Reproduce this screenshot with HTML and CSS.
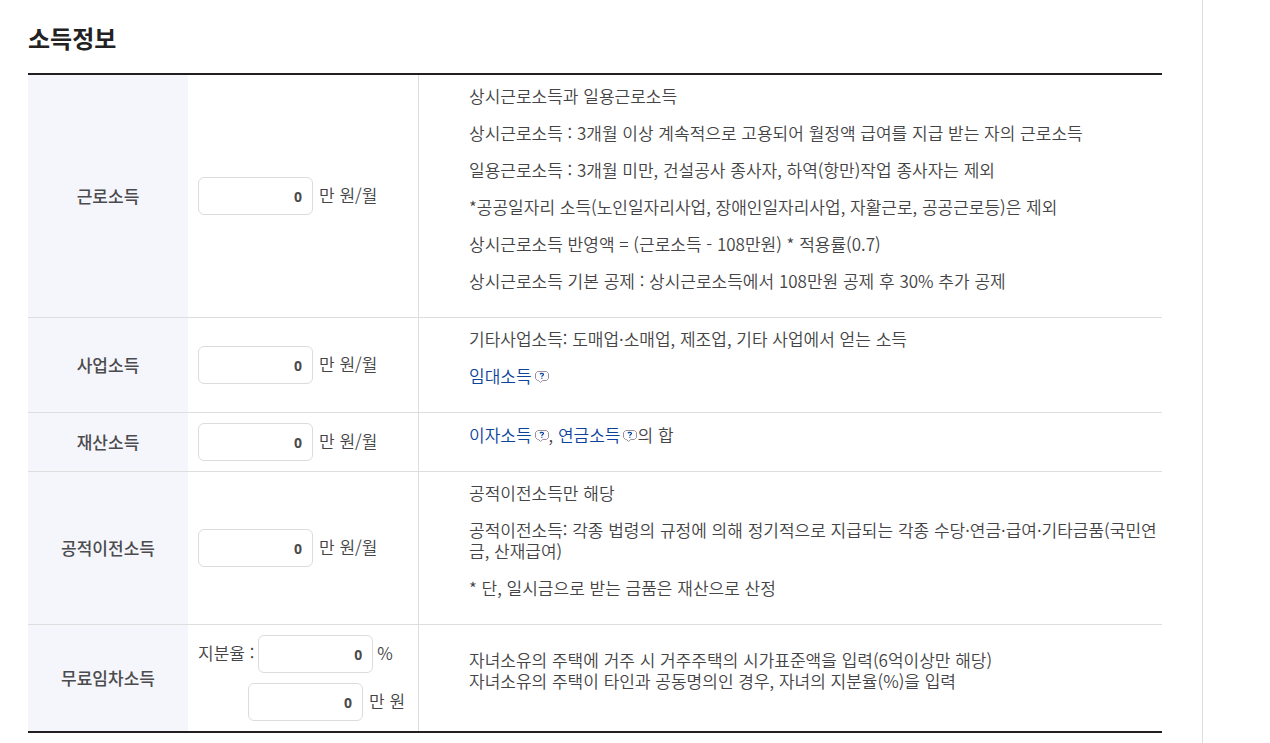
FILE: index.html
```html
<!DOCTYPE html>
<html lang="ko">
<head>
<meta charset="utf-8">
<title>소득정보</title>
<link rel="stylesheet" href="styles.css">
</head>
<body>
<svg class="sprite" aria-hidden="true">
  <symbol id="help" viewBox="0 0 14 12">
    <path d="M2.500 .5h9l2 2v5l-2 2H7.500L5.500 11.500 3.500 9.500h-1l-2-2v-5z" fill="#fcfbfd" stroke="#9c8f9c"/>
    <path d="M5 3.200C5.400 2.200 8.500 2 8.500 3.500 8.500 4.600 6.800 4.500 6.800 5.800M6.800 6.800v1" fill="none" stroke="#0c449b" stroke-width="1.200"/>
  </symbol>
</svg>
<main class="content">
  <h1 class="title">소득정보</h1>
  <table class="income">
    <tbody>
      <tr>
        <th scope="row"><label for="earned">근로소득</label></th>
        <td class="amount"><div class="field"><input id="earned" type="text" value="0"><span>만 원/월</span></div></td>
        <td class="desc">
          <p>상시근로소득과 일용근로소득</p>
          <p>상시근로소득 : 3개월 이상 계속적으로 고용되어 월정액 급여를 지급 받는 자의 근로소득</p>
          <p>일용근로소득 : 3개월 미만, 건설공사 종사자, 하역(항만)작업 종사자는 제외</p>
          <p>*공공일자리 소득(노인일자리사업, 장애인일자리사업, 자활근로, 공공근로등)은 제외</p>
          <p>상시근로소득 반영액 = (근로소득 - 108만원) * 적용률(0.7)</p>
          <p>상시근로소득 기본 공제 : 상시근로소득에서 108만원 공제 후 30% 추가 공제</p>
        </td>
      </tr>
      <tr>
        <th scope="row"><label for="business">사업소득</label></th>
        <td class="amount"><div class="field"><input id="business" type="text" value="0"><span>만 원/월</span></div></td>
        <td class="desc">
          <p>기타사업소득: 도매업·소매업, 제조업, 기타 사업에서 얻는 소득</p>
          <p><a href="#rent">임대소득<svg class="help"><use href="#help"/></svg></a></p>
        </td>
      </tr>
      <tr>
        <th scope="row"><label for="property">재산소득</label></th>
        <td class="amount"><div class="field"><input id="property" type="text" value="0"><span>만 원/월</span></div></td>
        <td class="desc">
          <p><a href="#interest">이자소득<svg class="help"><use href="#help"/></svg></a>, <a href="#pension">연금소득<svg class="help"><use href="#help"/></svg></a>의 합</p>
        </td>
      </tr>
      <tr>
        <th scope="row"><label for="transfer">공적이전소득</label></th>
        <td class="amount"><div class="field"><input id="transfer" type="text" value="0"><span>만 원/월</span></div></td>
        <td class="desc">
          <p>공적이전소득만 해당</p>
          <p>공적이전소득: 각종 법령의 규정에 의해 정기적으로 지급되는 각종 수당·연금·급여·기타금품(국민연금, 산재급여)</p>
          <p>* 단, 일시금으로 받는 금품은 재산으로 산정</p>
        </td>
      </tr>
      <tr>
        <th scope="row"><label for="freerent">무료임차소득</label></th>
        <td class="amount">
          <div class="field share"><label for="share">지분율 :</label><input id="share" type="text" value="0"><span>%</span></div>
          <div class="field indent"><input id="freerent" type="text" value="0"><span>만 원</span></div>
        </td>
        <td class="desc">
          <p>자녀소유의 주택에 거주 시 거주주택의 시가표준액을 입력(6억이상만 해당)<br>자녀소유의 주택이 타인과 공동명의인 경우, 자녀의 지분율(%)을 입력</p>
        </td>
      </tr>
    </tbody>
  </table>
</main>
</body>
</html>
```
FILE: styles.css
```css
* { box-sizing: border-box; }
body {
  margin: 0;
  padding-right: 67px;
  color: #444446;
  background: #fff;
  font: 350 17px/21px "Noto Sans CJK KR", sans-serif;
}
.sprite { display: none; }
.content {
  min-height: 100vh;
  padding: 23px 40px 10px 28px;
  border-right: 1px solid #dedede;
}
.title {
  margin: 0 0 20px;
  font-size: 24px;
  line-height: 30px;
  font-weight: 700;
  color: #222;
}
.income {
  width: 100%;
  table-layout: fixed;
  border-spacing: 0;
  border-top: 2px solid #231f20;
  border-bottom: 2px solid #231f20;
}
th, td {
  padding: 10px;
  border-bottom: 1px solid #dedede;
  vertical-align: middle;
}
tr:last-child > * { border-bottom: 0; }
th {
  width: 160px;
  padding: 9px 10px 11px;
  background: #f5f6fc;
  font-weight: 500;
  color: #4b4b4d;
}
.amount {
  width: 231px;
  border-right: 1px solid #dedede;
}
.desc {
  padding: 10px 0 10px 50px;
  word-break: break-all;
}
.desc p { margin: 0 0 16px; }
.field {
  display: flex;
  align-items: baseline;
  gap: 6px;
  white-space: nowrap;
}
.share { gap: 4px; }
.indent {
  margin-top: 10px;
  padding-left: 50px;
}
.field input {
  width: 115px;
  height: 38px;
  padding: 0 10px;
  border: 1px solid #dcdcde;
  border-radius: 6px;
  background: #fff;
  color: #4b4b4d;
  font: 700 14px "Noto Sans", sans-serif;
  text-align: right;
}
a {
  color: #0c449b;
  text-decoration: none;
}
.help {
  width: 14px;
  height: 12px;
  margin-left: 3px;
}
```
